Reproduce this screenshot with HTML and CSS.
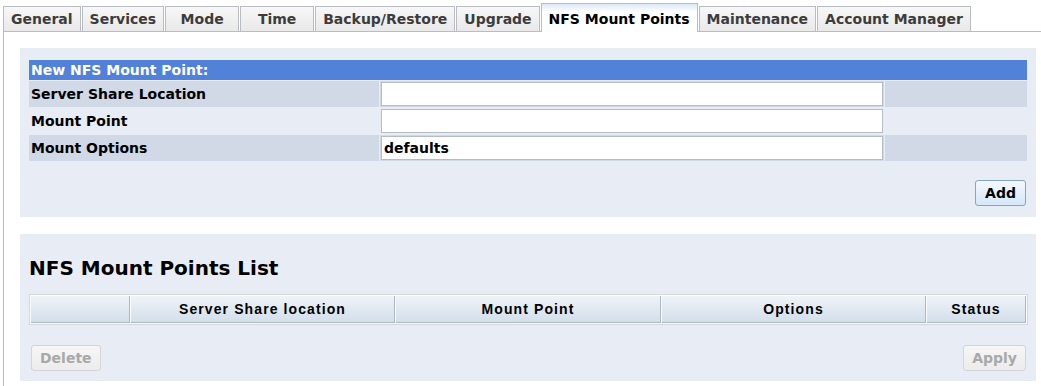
FILE: index.html
```html
<!DOCTYPE html>
<html>
<head>
<meta charset="utf-8">
<title>NFS Mount Points</title>
<link rel="stylesheet" href="styles.css">
</head>
<body>
<div class="tabs">
  <div class="tab">General</div>
  <div class="tab">Services</div>
  <div class="tab">Mode</div>
  <div class="tab">Time</div>
  <div class="tab">Backup/Restore</div>
  <div class="tab">Upgrade</div>
  <div class="tab active">NFS Mount Points</div>
  <div class="tab">Maintenance</div>
  <div class="tab">Account Manager</div>
</div>
<div class="panel">
  <div class="section new-section">
    <table class="form-table">
      <colgroup>
        <col class="col-label">
        <col class="col-field">
        <col class="col-rest">
      </colgroup>
      <tr><th class="bar" colspan="3">New NFS Mount Point:</th></tr>
      <tr class="alt">
        <td class="label">Server Share Location</td>
        <td class="field"><input class="text" type="text" value=""></td>
        <td class="rest"></td>
      </tr>
      <tr>
        <td class="label">Mount Point</td>
        <td class="field"><input class="text" type="text" value=""></td>
        <td class="rest"></td>
      </tr>
      <tr class="alt">
        <td class="label">Mount Options</td>
        <td class="field"><input class="text" type="text" value="defaults"></td>
        <td class="rest"></td>
      </tr>
    </table>
    <div class="actions right add-row">
      <button class="btn primary">Add</button>
    </div>
  </div>
  <div class="section list-section">
    <h2 class="heading">NFS Mount Points List</h2>
    <table class="list-table">
      <tr>
        <th class="c-sel"></th>
        <th class="c-wide">Server Share location</th>
        <th class="c-mid">Mount Point</th>
        <th class="c-wide">Options</th>
        <th class="c-sel">Status</th>
      </tr>
    </table>
    <div class="actions split">
      <button class="btn disabled">Delete</button>
      <button class="btn disabled">Apply</button>
    </div>
  </div>
</div>
</body>
</html>
```
FILE: styles.css
```css
html, body {
  margin: 0;
  padding: 0;
  background: #ffffff;
  font-family: "DejaVu Sans", Verdana, sans-serif;
  font-size: 14px;
  font-weight: bold;
  color: #000;
}

.tabs {
  display: flex;
  align-items: flex-end;
  padding: 3px 0 0 3px;
  height: 28px;
}

.tab {
  box-sizing: border-box;
  min-width: 74px;
  height: 25px;
  padding: 0 7px;
  margin-right: 1px;
  border: 1px solid #b9bcc3;
  border-bottom: none;
  background: linear-gradient(#f7f7f7, #e9e9e9);
  color: #3c3c3c;
  text-align: center;
  line-height: 24px;
  white-space: nowrap;
}

.tab.active {
  position: relative;
  z-index: 1;
  height: 29px;
  margin-bottom: -1px;
  padding-top: 3px;
  line-height: 24px;
  background: linear-gradient(#dde8f6 0px, #ffffff 8px, #ffffff);
  color: #000;
}

.panel {
  box-sizing: border-box;
  margin-left: 3px;
  border-top: 1px solid #b9bcc3;
  border-left: 1px solid #b9bcc3;
  padding: 16px 5px 0 16px;
  min-height: calc(100vh - 31px);
}

.section {
  background: #e8ecf4;
}

.new-section {
  padding: 11px 8px 11px 8px;
  margin-bottom: 17px;
}

.form-table {
  width: 100%;
  border-spacing: 1px;
  border-collapse: separate;
  table-layout: fixed;
}

.col-label { width: 350px; }
.col-field { width: 504px; }

.form-table th.bar {
  background: #5281d9;
  color: #fff;
  text-align: left;
  height: 20px;
  padding: 0 2px;
  line-height: 20px;
}

.form-table td {
  height: 26px;
  padding: 0;
  vertical-align: middle;
}

.form-table tr.alt td {
  background: #d1d8e6;
}

.form-table td.label {
  padding-left: 2px;
  white-space: nowrap;
}

.form-table td.field {
  padding: 0 1px;
}

.text {
  display: block;
  box-sizing: border-box;
  width: 502px;
  height: 24px;
  margin: 0;
  padding: 0 2px;
  border: 1px solid #b6bcc6;
  background: #fff;
  font-family: "DejaVu Sans", Verdana, sans-serif;
  font-size: 14px;
  font-weight: bold;
  color: #000;
}

.actions {
  display: flex;
  margin-top: 20px;
  padding: 0 2px;
}

.actions.add-row {
  margin-top: 18px;
}

.actions.right {
  justify-content: flex-end;
}

.actions.split {
  justify-content: space-between;
}

.btn {
  box-sizing: border-box;
  height: 26px;
  padding: 0 8px;
  border-radius: 3px;
  font-family: "DejaVu Sans", Verdana, sans-serif;
  font-size: 14px;
  font-weight: bold;
  line-height: 24px;
}

.btn.primary {
  border: 1px solid #86a4c6;
  background: linear-gradient(#f3f8fd, #d6e7f8);
  color: #000;
  padding: 0 9px;
}

.btn.disabled {
  border: 1px solid #d3d5d8;
  background: linear-gradient(#f6f6f6, #ececec);
  color: #a9a9a9;
}

.list-section {
  padding: 22px 8px 10px 9px;
}

.heading {
  margin: 0 0 14px 0;
  font-size: 20px;
  line-height: 24px;
  font-weight: bold;
}

.list-table {
  width: 999px;
  border: 1px solid #d5d9de;
  border-spacing: 1px;
  border-collapse: separate;
  background: #fafbfc;
  table-layout: fixed;
}

.list-table th {
  box-sizing: border-box;
  height: 27px;
  padding: 0;
  border-right: 1px solid #aeb8c3;
  border-bottom: 1px solid #aeb8c3;
  background: linear-gradient(#eef3f8, #d3dfea);
  font-family: "Liberation Sans", Arial, sans-serif;
  font-size: 14px;
  letter-spacing: 1.1px;
  text-align: center;
  vertical-align: middle;
}

.list-table th.c-sel { width: 99px; }
.list-table th.c-wide { width: 264px; }
.list-table th.c-mid { width: 265px; }
```
